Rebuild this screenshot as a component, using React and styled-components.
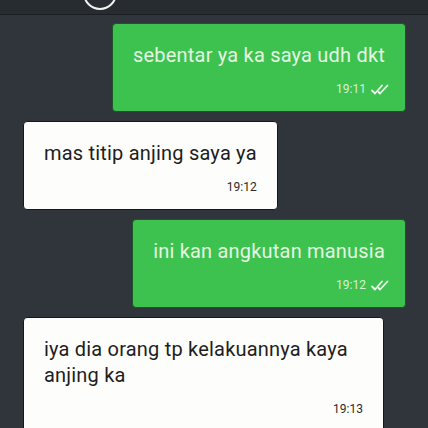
import React from 'react';
import styled, { createGlobalStyle } from 'styled-components';

const GlobalStyle = createGlobalStyle`
  html, body {
    margin: 0;
    padding: 0;
    background: #2f353b;
  }
  body {
    font-family: Roboto, "Noto Sans", sans-serif;
  }
`;

const Screen = styled.div`
  width: 428px;
  height: 428px;
  overflow: hidden;
  background: #2f353b;
  display: flex;
  flex-direction: column;
`;

const Header = styled.div`
  height: 14px;
  flex-shrink: 0;
  background: #272c31;
  border-bottom: 1px solid #1c2024;
  overflow: hidden;
  display: flex;
`;

const Avatar = styled.div`
  width: 30px;
  height: 30px;
  margin: -24px 0 0 83px;
  border: 2px solid #f2f2f2;
  border-radius: 50%;
  background: #2a2f34;
`;

const Thread = styled.div`
  display: flex;
  flex-direction: column;
  gap: 9px;
  padding: 8px 22px 0 23px;
`;

const Bubble = styled.div`
  align-self: ${(p) => (p.$out ? 'flex-end' : 'flex-start')};
  max-width: 319px;
  padding: 18px 20px 15px 20px;
  border-radius: 4px;
  border: 1px solid ${(p) => (p.$out ? '#1d5527' : '#15181b')};
  background: ${(p) => (p.$out ? '#3dc24f' : '#fdfdfb')};
  color: ${(p) => (p.$out ? '#e4f6e2' : '#1e1e1e')};
`;

const Text = styled.div`
  font-size: 20px;
  line-height: 26px;
  letter-spacing: 0.2px;
`;

const Meta = styled.div`
  display: flex;
  justify-content: flex-end;
  align-items: center;
  gap: 5px;
  margin-top: 14px;
  margin-right: ${(p) => (p.$out ? '-7px' : '0')};
  height: 14px;
  font-size: 12px;
  color: ${(p) => (p.$out ? '#d9f1d8' : '#2a2a2a')};
`;

const Ticks = () => (
  <svg width="21" height="11" viewBox="0 0 21 11" fill="none" stroke="#eef8ee" strokeWidth="1.8" strokeLinecap="round" strokeLinejoin="round">
    <path d="M1 6.5 L4 9.5 L11 1.5" />
    <path d="M7.5 8 L9 9.5 L16.5 1.5" />
  </svg>
);

const messages = [
  { out: true, text: 'sebentar ya ka saya udh dkt', time: '19:11' },
  { out: false, text: 'mas titip anjing saya ya', time: '19:12' },
  { out: true, text: 'ini kan angkutan manusia', time: '19:12' },
  { out: false, text: 'iya dia orang tp kelakuannya kaya anjing ka', time: '19:13' },
];

export default function App() {
  return (
    <Screen>
      <GlobalStyle />
      <Header>
        <Avatar />
      </Header>
      <Thread>
        {messages.map((m, i) => (
          <Bubble key={i} $out={m.out}>
            <Text>{m.text}</Text>
            <Meta $out={m.out}>
              <span>{m.time}</span>
              {m.out && <Ticks />}
            </Meta>
          </Bubble>
        ))}
      </Thread>
    </Screen>
  );
}
